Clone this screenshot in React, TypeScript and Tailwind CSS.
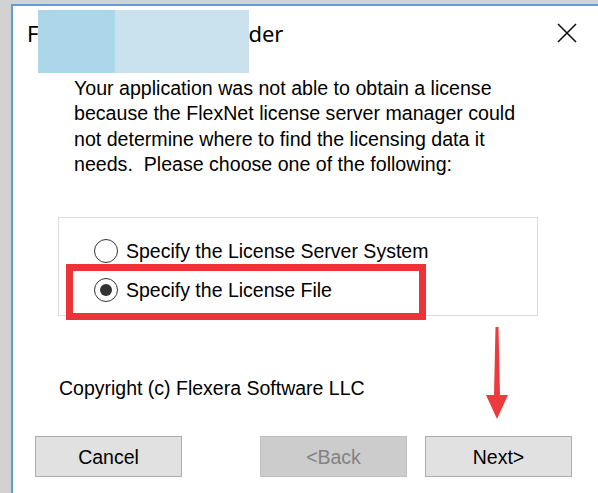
import React from "react";

const sans = { fontFamily: '"Liberation Sans", Arial, sans-serif' };

function Radio({ checked }: { checked?: boolean }) {
  return (
    <span className="w-[24px] h-[24px] rounded-full border-[1.5px] border-[#333333] bg-white flex items-center justify-center shrink-0">
      {checked && <span className="w-[12px] h-[12px] rounded-full bg-[#333333]" />}
    </span>
  );
}

export default function App() {
  return (
    <div className="w-[598px] h-[493px] bg-[#d2d2d2] flex overflow-hidden relative" style={sans}>
      <div className="flex-1 ml-[11px] mt-[4px] border-l-2 border-t-2 border-[#5b9be0] bg-white flex flex-col relative">
        {/* Title bar */}
        <div className="h-[54px] flex items-center justify-between pl-[14px] pr-[21px]">
          <div
            className="flex items-center text-[22px] text-black whitespace-nowrap"
            style={{ fontFamily: '"Noto Sans", "Open Sans", sans-serif' }}
          >
            <span>F</span>
            <span className="inline-block w-[210px] overflow-hidden">lexNet License Fin</span>
            <span>der</span>
          </div>
          <svg width="20" height="20" viewBox="0 0 20 20" className="shrink-0">
            <path d="M1 1 L19 19 M19 1 L1 19" stroke="#111" strokeWidth="1.6" />
          </svg>
        </div>
        {/* masks over title */}
        <div className="absolute left-[25px] top-[4px] h-[63px] flex">
          <div className="w-[77px] h-full bg-[#acd7ea]" />
          <div className="w-[134px] h-full bg-[#c9e2ed]" />
        </div>

        {/* Body text */}
        <div className="mt-[16px] pl-[61px] text-[19.6px] leading-[25.3px] text-black">
          <div>Your application was not able to obtain a license</div>
          <div>because the FlexNet license server manager could</div>
          <div>not determine where to find the licensing data it</div>
          <div>needs.&nbsp; Please choose one of the following:</div>
        </div>

        {/* Group box */}
        <div className="mt-[40px] ml-[45px] w-[480px] h-[99px] border border-[#dcdcdc] relative flex flex-col pl-[35px] pt-[21px] gap-[15px] text-[19.5px] text-black">
          <div className="flex items-center gap-[8px] h-[24px]">
            <Radio />
            <span>Specify the License Server System</span>
          </div>
          <div className="flex items-center gap-[8px] h-[24px]">
            <Radio checked />
            <span>Specify the License File</span>
          </div>
          <div className="absolute left-[7px] top-[46px] w-[360px] h-[56px] border-[7px] border-[#ee3338]" />
        </div>

        {/* Copyright */}
        <div className="mt-[60px] pl-[46px] text-[19.5px] leading-[25px] text-black">
          Copyright (c) Flexera Software LLC
        </div>

        {/* Buttons */}
        <div className="mt-[35px] flex pl-[22px] text-[19.5px]">
          <div className="w-[147px] h-[41px] bg-[#e1e1e1] border border-[#adadad] flex items-center justify-center pt-[2px] text-black">
            Cancel
          </div>
          <div className="ml-[78px] w-[147px] h-[41px] bg-[#cccccc] border border-[#bfbfbf] flex items-center justify-center pt-[2px] text-[#838383]">
            &lt;Back
          </div>
          <div className="ml-[18px] w-[147px] h-[41px] bg-[#e1e1e1] border border-[#adadad] flex items-center justify-center pt-[2px] text-black">
            Next&gt;
          </div>
        </div>

        {/* Red arrow */}
        <svg className="absolute left-[472px] top-[321px]" width="24" height="93" viewBox="0 0 24 93">
          <polygon points="10.5,0 13.5,0 15,68 23,68 12,92 1,68 9,68" fill="#ef3a3d" />
        </svg>
      </div>
    </div>
  );
}
